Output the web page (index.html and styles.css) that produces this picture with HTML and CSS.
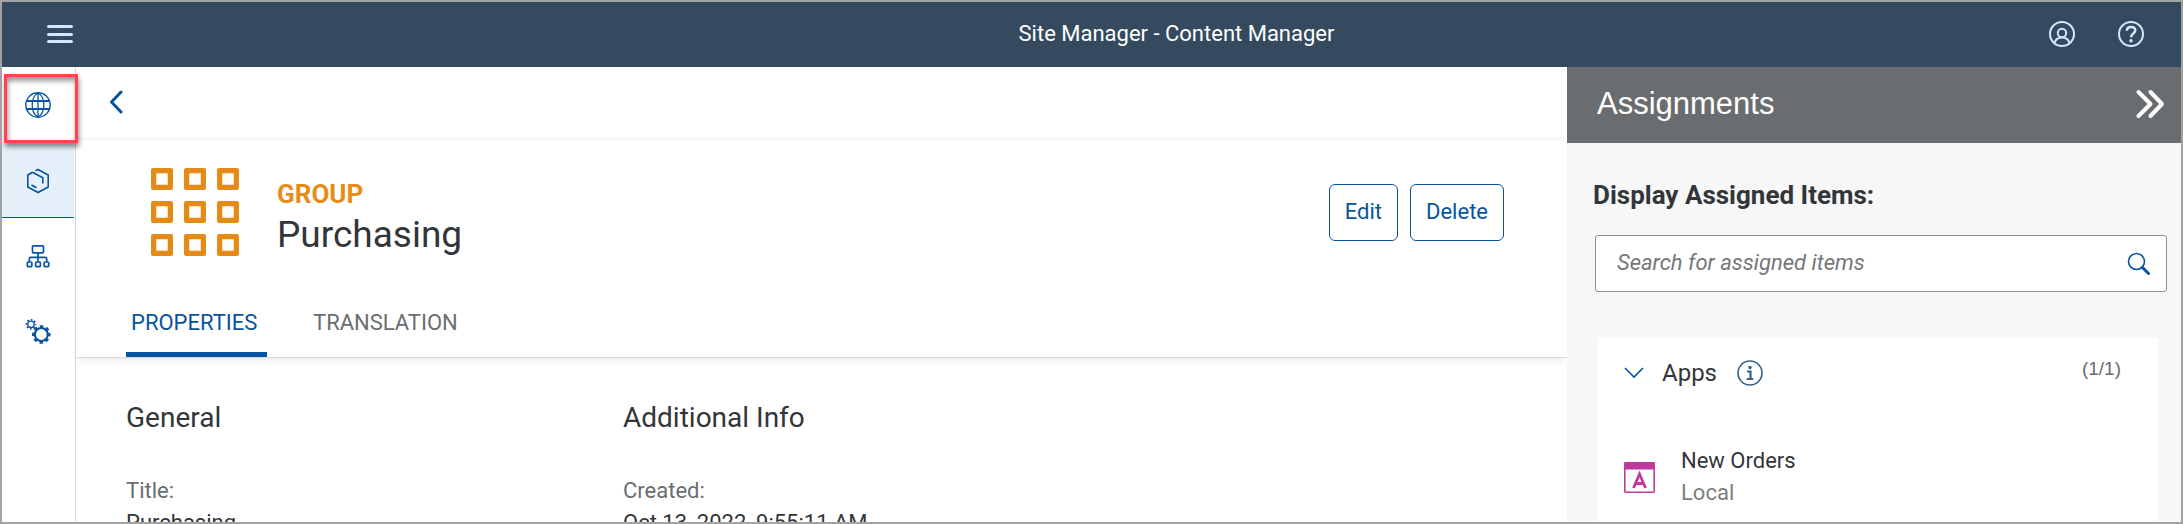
FILE: index.html
```html
<!DOCTYPE html>
<html lang="en">
<head>
<meta charset="utf-8">
<title>Site Manager - Content Manager</title>
<link rel="stylesheet" href="styles.css">
</head>
<body>
<div class="app">
  <header class="shell">
    <button class="icon-btn" aria-label="Menu">
      <svg width="26" height="18" viewBox="0 0 26 18"><path d="M1.500 1.500H24.500M1.500 9.500H24.500M1.500 16.500H24.500" fill="none" stroke="#d1e8ff" stroke-width="3" stroke-linecap="round"/></svg>
    </button>
    <h1 class="shell-title">Site Manager - Content Manager</h1>
    <div class="shell-actions">
      <button class="icon-btn" aria-label="User">
        <svg width="26" height="26" viewBox="0 0 26 26" fill="none" stroke="#d1e8ff" stroke-width="2"><circle cx="13" cy="13" r="12"/><circle cx="13" cy="12" r="4.200"/><path d="M5.500 22C6.500 18.500 9 16.500 13 16.500S19.500 18.500 20.500 22"/></svg>
      </button>
      <button class="icon-btn" aria-label="Help">
        <svg width="26" height="26" viewBox="0 0 26 26" fill="none" stroke="#d1e8ff" stroke-width="2"><circle cx="13" cy="13" r="12"/><path d="M8.800 9.800C8.800 7.300 10.500 6 13 6S17.300 7.400 17.300 9.600C17.300 12.400 13 12.700 13 16.300" stroke-width="2.400"/><circle cx="13" cy="19.700" r="1.700" fill="#d1e8ff" stroke="none"/></svg>
      </button>
    </div>
  </header>
  <div class="body">
    <nav class="side">
      <button class="side-item" aria-label="Site directory">
        <svg width="26" height="26" viewBox="0 0 26 26" fill="none" stroke="#0854a0"><circle cx="13" cy="13" r="12.200" stroke-width="1.400"/><path d="M13 1C9 3 7.200 8 7.200 13S9 23 13 25C17 23 18.800 18 18.800 13S17 3 13 1M13 1V25" stroke-width="1.300"/><path d="M2 9H24M2 17H24" stroke-width="2"/></svg>
        <span class="highlight"></span>
      </button>
      <button class="side-item selected" aria-label="Content manager">
        <svg width="24" height="26" viewBox="0 0 24 26" fill="none" stroke="#0854a0" stroke-width="1.600"><path d="M6.500 4.300L1.800 7V19L12 24.500L22.200 19V7L12 1.500L9.500 2.800M6.500 4.300L16.800 9.800V15.500M5.500 17L10.500 19.800"/></svg>
      </button>
      <button class="side-item" aria-label="Hierarchy">
        <svg width="24" height="24" viewBox="0 0 24 24" fill="none" stroke="#0854a0" stroke-width="1.700"><rect x="6.500" y="1.800" width="11" height="7" rx="0.800"/><path d="M12 9V18M3.300 18V14.800Q3.300 13.300 4.800 13.300H19.200Q20.700 13.300 20.700 14.800V18"/><rect x="1.300" y="18" width="4.600" height="4.600" rx="1"/><rect x="9.600" y="18" width="4.800" height="4.600" rx="1"/><rect x="18.100" y="18" width="4.600" height="4.600" rx="1"/></svg>
      </button>
      <button class="side-item" aria-label="Settings">
        <svg width="26" height="26" viewBox="0 0 26 26" fill="none" stroke="#0854a0"><circle cx="16.300" cy="16.500" r="6.500" stroke-width="2.200"/><circle cx="16.300" cy="16.500" r="8" stroke-width="2.600" stroke-dasharray="3.400 2.883" stroke-dashoffset="1.700"/><circle cx="6" cy="6.300" r="3.200" stroke-width="1.400"/><circle cx="6" cy="6.300" r="4.600" stroke-width="1.600" stroke-dasharray="1.700 1.913" stroke-dashoffset="0.800"/></svg>
      </button>
    </nav>
    <main class="main">
      <div class="nav-bar">
        <button class="icon-btn" aria-label="Back">
          <svg width="14" height="24" viewBox="0 0 14 24"><path d="M12 2L2.500 12L12 22" fill="none" stroke="#0854a0" stroke-width="3" stroke-linecap="round" stroke-linejoin="round"/></svg>
        </button>
      </div>
      <div class="object-header">
        <div class="object-row">
          <div class="group-icon"><i></i><i></i><i></i><i></i><i></i><i></i><i></i><i></i><i></i></div>
          <div class="object-text">
            <div class="kind">GROUP</div>
            <h2 class="name">Purchasing</h2>
          </div>
          <div class="actions">
            <button class="btn">Edit</button>
            <button class="btn">Delete</button>
          </div>
        </div>
        <div class="tabs" role="tablist">
          <button class="tab active" role="tab" aria-selected="true">PROPERTIES</button>
          <button class="tab" role="tab" aria-selected="false">TRANSLATION</button>
        </div>
      </div>
      <div class="details">
        <section>
          <h3>General</h3>
          <dl><dt>Title:</dt><dd>Purchasing</dd></dl>
        </section>
        <section>
          <h3>Additional Info</h3>
          <dl><dt>Created:</dt><dd>Oct 13, 2022, 9:55:11 AM</dd></dl>
        </section>
      </div>
    </main>
    <aside class="panel">
      <div class="panel-head">
        <h2>Assignments</h2>
        <button class="icon-btn" aria-label="Collapse">
          <svg width="30" height="30" viewBox="0 0 30 30"><path d="M3.500 3L15.500 15L3.500 27M15.500 3L27 15L15.500 27" fill="none" stroke="#fff" stroke-width="4" stroke-linecap="round" stroke-linejoin="round"/></svg>
        </button>
      </div>
      <div class="panel-body">
        <label class="search-label" for="search">Display Assigned Items:</label>
        <div class="search">
          <input id="search" type="text" placeholder="Search for assigned items">
          <button class="icon-btn" aria-label="Search">
            <svg width="24" height="24" viewBox="0 0 24 24" fill="none" stroke="#0854a0"><circle cx="9.500" cy="9.500" r="8" stroke-width="1.600"/><path d="M15.500 15.500L21.500 21.500" stroke-width="3" stroke-linecap="round"/></svg>
          </button>
        </div>
        <section class="card">
          <div class="card-head">
            <button class="icon-btn" aria-label="Collapse apps">
              <svg width="20" height="12" viewBox="0 0 20 12"><path d="M1 1L10 10L19 1" fill="none" stroke="#0854a0" stroke-width="1.600"/></svg>
            </button>
            <h3>Apps</h3>
            <button class="icon-btn" aria-label="Information">
              <svg width="26" height="26" viewBox="0 0 26 26"><circle cx="13" cy="13" r="12" fill="none" stroke="#346187" stroke-width="1.600"/><circle cx="13" cy="7.500" r="1.700" fill="#346187"/><path d="M10 11.500H13.500V19M9.800 19H16.200" fill="none" stroke="#346187" stroke-width="2.200"/></svg>
            </button>
            <span class="count">(1/1)</span>
          </div>
          <div class="item">
            <svg width="31" height="31" viewBox="0 0 31 31"><rect x="0.800" y="0.800" width="29.400" height="29.400" rx="1" fill="#fff" stroke="#c0399f" stroke-width="1.600"/><path d="M0 1.500Q0 0 1.500 0H29.500Q31 0 31 1.500V7.500H0Z" fill="#c0399f"/><path d="M9.500 26L15.500 12L21.500 26M11.500 21.500H19.500" fill="none" stroke="#c0399f" stroke-width="2.800"/></svg>
            <div>
              <div class="item-title">New Orders</div>
              <div class="item-sub">Local</div>
            </div>
          </div>
        </section>
      </div>
    </aside>
  </div>
</div>
</body>
</html>
```
FILE: styles.css
```css
* { box-sizing: border-box; }

body {
  margin: 0;
  font: 22px/26px Roboto, "Noto Sans", sans-serif;
  color: #32363a;
}

h1, h2, h3, dl, dd { margin: 0; font-weight: 400; }
button { font: inherit; margin: 0; cursor: pointer; }
svg { display: block; }

.app {
  height: 100vh;
  overflow: hidden;
  display: flex;
  flex-direction: column;
  border: 2px solid #a3a3a3;
  background: #fff;
}

.icon-btn { padding: 0; border: 0; background: none; }

.shell {
  flex: none;
  display: grid;
  grid-template-columns: 162px 1fr auto 1fr;
  align-items: center;
  height: 65px;
  padding: 0 37px 2px 45px;
  background: #354a5f;
}
.shell-title { grid-column: 3; color: #fff; font-size: 22px; line-height: 26px; }
.shell-actions { display: flex; justify-content: flex-end; gap: 43px; }

.body { flex: 1; display: flex; min-height: 0; }

.side {
  flex: none;
  width: 74px;
  padding-right: 1px;
  border-right: 1px solid #d9d9d9;
}
.side-item {
  position: relative;
  display: flex;
  align-items: center;
  justify-content: center;
  width: 100%;
  height: 75px;
  padding: 2px 0 0;
  border: 0;
  border-bottom: 1px solid transparent;
  background: none;
}
.side-item.selected { height: 76px; background: #e5f0fa; border-bottom-color: #0854a0; }
.highlight {
  position: absolute;
  z-index: 2;
  inset: 7px -4px -2px 2px;
  border: 3px solid #ff4545;
  box-shadow: 1px 4px 5px rgba(0, 0, 0, .45), inset 1px 4px 5px rgba(0, 0, 0, .4);
}

.main { flex: 1; min-width: 0; }
.nav-bar {
  display: flex;
  align-items: center;
  height: 70px;
  padding: 0 33px;
  box-shadow: 0 2px 4px rgba(0, 0, 0, .05);
}
.object-header {
  border-bottom: 1px solid #d9d9d9;
  box-shadow: 0 4px 8px -3px rgba(0, 0, 0, .12);
}
.object-row { display: flex; align-items: flex-start; padding: 31px 63px 0 75px; }
.group-icon { display: grid; grid-template-columns: repeat(3, 22px); gap: 11px; }
.group-icon i {
  height: 22px;
  border: 5px solid #e38b16;
  border-radius: 2px;
  box-shadow: inset 0 0 2px #e38b16;
}
.object-text { flex: 1; padding: 12px 0 0 38px; }
.kind { color: #e78c17; font-size: 26px; font-weight: 700; line-height: 28px; }
.name { font-size: 37px; line-height: 44px; padding-top: 5px; }
.actions { display: flex; gap: 12px; padding-top: 16px; }
.btn {
  height: 57px;
  padding: 0 15px 2px;
  border: 1px solid #0854a0;
  border-radius: 6px;
  background: #fff;
  color: #0854a0;
}
.tabs { display: flex; gap: 41px; padding: 47px 50px 0; }
.tab {
  height: 53px;
  min-width: 141px;
  padding: 7px 5px 22px;
  border: 0;
  background: none;
  color: #6a6d70;
  line-height: 24px;
  text-align: left;
}
.tab.active {
  color: #0854a0;
  background: linear-gradient(#0854a0, #0854a0) bottom / 100% 5px no-repeat;
  border-radius: 3px 3px 0 0;
}
.details {
  display: grid;
  grid-template-columns: 497px 1fr;
  padding: 42px 50px 0;
}
.details h3 { font-size: 28px; line-height: 36px; }
.details dl { padding-top: 39px; }
.details dt { color: #6a6d70; line-height: 32px; }
.details dd { line-height: 32px; }

.panel { flex: none; width: 614px; background: #f7f7f7; }
.panel-head {
  display: flex;
  align-items: center;
  justify-content: space-between;
  height: 76px;
  padding: 0 16px 3px 30px;
  background: #6a6d70;
  color: #fff;
}
.panel-head h2 { font: 31px/36px "Liberation Sans", Arial, sans-serif; }
.panel-body { padding: 36px 14px 0 26px; }
.search-label { display: block; font-size: 26px; font-weight: 700; line-height: 32px; }
.search {
  display: flex;
  align-items: center;
  height: 57px;
  margin: 24px 0 0 2px;
  padding-right: 15px;
  border: 1px solid #89919a;
  border-radius: 3px;
  background: #fff;
}
.search input {
  flex: 1;
  min-width: 0;
  height: 100%;
  padding: 0 21px 2px;
  border: 0;
  outline: 0;
  background: none;
  font: inherit;
}
.search input::placeholder { color: #74777a; font-style: italic; opacity: 1; }
.card { margin: 46px 9px 0 5px; padding: 17px 37px 60px 26px; background: #fff; }
.card-head { display: flex; align-items: center; height: 36px; }
.card-head h3 { font-size: 24px; line-height: 32px; padding: 0 20px 0 18px; }
.count { margin-left: auto; padding-bottom: 8px; color: #6a6d70; font: 19px/20px "Liberation Sans", Arial, sans-serif; }
.item { display: flex; align-items: center; gap: 26px; padding-top: 54px; }
.item-title, .item-sub { line-height: 32px; }
.item-sub { color: #7c7f82; }
```
